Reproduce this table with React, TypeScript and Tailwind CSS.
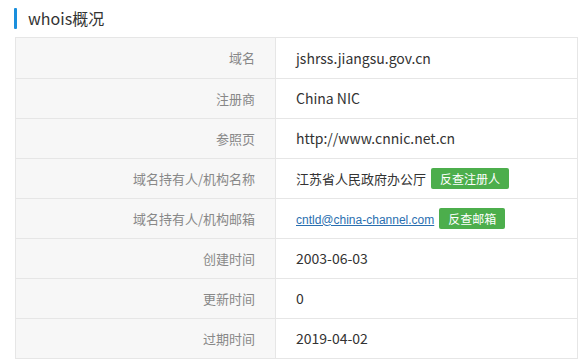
import React from "react";

type Row = { label: string; value: React.ReactNode };

const cjk = '"Noto Sans CJK SC", "Noto Sans", sans-serif';

function Btn({ children }: { children: React.ReactNode }) {
  return (
    <span className="ml-[5px] inline-flex h-[21px] items-center rounded-[2px] bg-[#4cae4c] px-[9px] text-[12px] leading-none text-white">
      {children}
    </span>
  );
}

const rows: Row[] = [
  { label: "域名", value: "jshrss.jiangsu.gov.cn" },
  { label: "注册商", value: "China NIC" },
  { label: "参照页", value: "http://www.cnnic.net.cn" },
  {
    label: "域名持有人/机构名称",
    value: (
      <span className="flex items-center">
        <span className="text-[13px]">江苏省人民政府办公厅</span>
        <Btn>反查注册人</Btn>
      </span>
    ),
  },
  {
    label: "域名持有人/机构邮箱",
    value: (
      <span className="flex items-center">
        <a
          href="#"
          className="mt-[2px] text-[12px] text-[#2a6fb0] underline"
          style={{ fontFamily: '"Liberation Sans", Arial, sans-serif' }}
        >
          cntld@china-channel.com
        </a>
        <Btn>反查邮箱</Btn>
      </span>
    ),
  },
  { label: "创建时间", value: "2003-06-03" },
  { label: "更新时间", value: "0" },
  { label: "过期时间", value: "2019-04-02" },
];

export default function App() {
  return (
    <div className="h-[360px] w-[580px] overflow-hidden bg-white" style={{ fontFamily: cjk }}>
      <div className="flex h-[37px] items-start pl-[14px] pt-[8px]">
        <span className="h-[21px] w-[3px] rounded-[1px] bg-[#1a8fdd]" />
        <span className="ml-[11px] text-[16px] leading-[21px] text-[#333]">whois概况</span>
      </div>
      <div className="ml-[15px] w-[563px] border border-[#e6e6e6]">
        {rows.map((r, i) => (
          <div
            key={r.label}
            className={`flex h-[40px] ${i > 0 ? "border-t border-[#e6e6e6]" : ""}`}
          >
            <div className="flex w-[260px] items-center justify-end border-r border-[#e6e6e6] bg-[#f7f7f7] pr-[20px] text-[13px] text-[#888]">
              {r.label}
            </div>
            <div className="flex flex-1 items-center pl-[20px] text-[14px] text-[#333]">
              {r.value}
            </div>
          </div>
        ))}
      </div>
    </div>
  );
}
